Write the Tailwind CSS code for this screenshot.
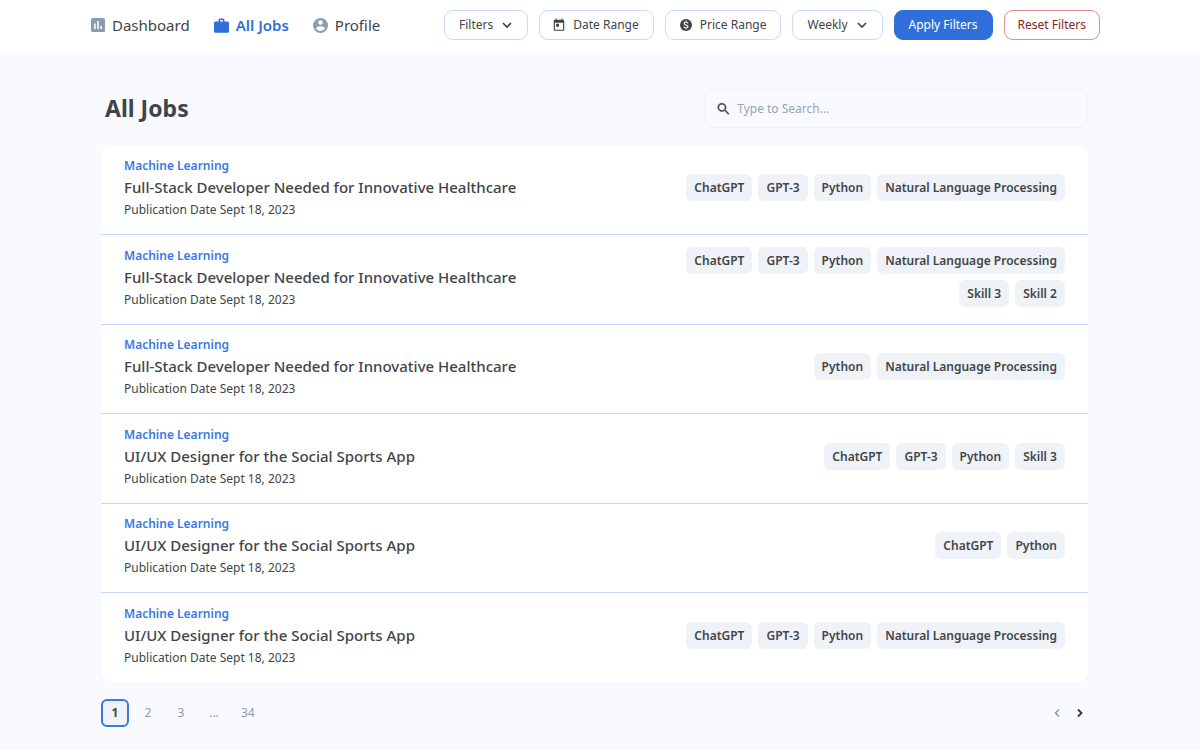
<!DOCTYPE html>
<html lang="en">
<head>
<meta charset="utf-8">
<meta name="viewport" content="width=device-width, initial-scale=1">
<title>All Jobs</title>
<script src="https://cdn.jsdelivr.net/npm/@tailwindcss/browser@4"></script>
</head>
<body class="min-h-screen bg-[#f8faff] font-['Noto_Sans',sans-serif] text-xs text-[#414548]">
<header class="flex items-center justify-between bg-white pt-[10px] pb-[13px] pr-[100px] pl-[91px]">
  <nav class="flex items-center gap-6 text-[15px] leading-5">
    <a href="#" class="flex items-center gap-[7px]">
      <svg class="size-3.5" viewBox="3 3 18 18" fill="#8c9bb3"><path d="M19 3H5a2 2 0 0 0-2 2v14a2 2 0 0 0 2 2h14a2 2 0 0 0 2-2V5a2 2 0 0 0-2-2Z"/><path d="M7 10h2v7H7zM11 7h2v10h-2zM15 13h2v4h-2z" fill="#fff"/></svg>
      Dashboard
    </a>
    <a href="#" class="flex items-center gap-[7px] font-semibold text-[#306fdb]">
      <svg class="size-[15px]" viewBox="2 2 20 19" fill="currentColor"><path d="M20 6h-4V4a2 2 0 0 0-2-2h-4a2 2 0 0 0-2 2v2H4a2 2 0 0 0-2 2v11a2 2 0 0 0 2 2h16a2 2 0 0 0 2-2V8a2 2 0 0 0-2-2Zm-6 0h-4V4h4v2Z"/></svg>
      All Jobs
    </a>
    <a href="#" class="flex items-center gap-[7px]">
      <svg class="size-[15px]" viewBox="2 2 20 20" fill="#8c9bb3"><path d="M12 2a10 10 0 1 0 0 20 10 10 0 0 0 0-20Zm0 3a3 3 0 1 1 0 6 3 3 0 0 1 0-6Zm0 14.200a7.200 7.200 0 0 1-6-3.220c.03-1.990 4-3.080 6-3.080s5.970 1.090 6 3.080a7.200 7.200 0 0 1-6 3.220Z"/></svg>
      Profile
    </a>
  </nav>
  <div class="flex items-center gap-[11px] leading-4">
    <button type="button" class="flex h-[30px] items-center gap-2 rounded-[9px] border border-[#cadbfa] px-3.5">Filters
      <svg class="size-3" viewBox="0 0 12 12" fill="none" stroke="currentColor" stroke-width="1.600"><path d="m2 4 4 4 4-4"/></svg>
    </button>
    <button type="button" class="flex h-[30px] items-center gap-[7px] rounded-[9px] border border-[#cadbfa] pr-3.5 pl-3">
      <svg class="size-3.5" viewBox="1 0 22 24" fill="currentColor"><path d="M19 3h-1V1h-2v2H8V1H6v2H5a2 2 0 0 0-2 2v15a2 2 0 0 0 2 2h14a2 2 0 0 0 2-2V5a2 2 0 0 0-2-2Zm0 17H5V8h14v12ZM7 10h5v5H7v-5Z"/></svg>
      Date Range
    </button>
    <button type="button" class="flex h-[30px] items-center gap-2 rounded-[9px] border border-[#cadbfa] px-3.5">
      <svg class="size-3" viewBox="2 2 20 20" fill="currentColor"><path d="M12 2a10 10 0 1 0 0 20 10 10 0 0 0 0-20Z"/><path d="M15.200 9.200c-.3-1.500-1.500-2.200-3.200-2.200s-3.100.9-3.100 2.400c0 3.400 6.400 1.700 6.400 5.100 0 1.600-1.400 2.500-3.300 2.500s-3.200-.8-3.400-2.500M12 4.800V7m0 10v2.200" fill="none" stroke="#fff" stroke-width="1.900"/></svg>
      Price Range
    </button>
    <button type="button" class="flex h-[30px] items-center gap-2 rounded-[9px] border border-[#cadbfa] px-3.5">Weekly
      <svg class="size-3" viewBox="0 0 12 12" fill="none" stroke="currentColor" stroke-width="1.600"><path d="m2 4 4 4 4-4"/></svg>
    </button>
    <button type="button" class="h-[30px] rounded-[9px] border border-[#306fdb] bg-[#306fdb] px-3.5 text-white">Apply Filters</button>
    <button type="button" class="h-[30px] rounded-[9px] border border-[#e28d8d] px-[13px] text-[#842525]">Reset Filters</button>
  </div>
</header>
<main class="pt-9 pr-[112px] pb-5 pl-[101px]">
  <div class="flex items-center justify-between pl-1">
    <h1 class="pb-0.5 text-[23px] leading-8 font-bold">All Jobs</h1>
    <label class="flex h-[39px] w-96 items-center gap-[7px] rounded-[9px] border border-[#f1f3f8] px-3">
      <svg class="size-3.5" viewBox="2 2 20 20" fill="currentColor" stroke="currentColor" stroke-width=".4" aria-label="Search"><path d="M15.500 14h-.79l-.28-.27a6.500 6.500 0 1 0-.7.700l.27.280v.790l5 4.990L20.490 19l-4.990-5Zm-6 0a4.500 4.500 0 1 1 0-9 4.500 4.500 0 0 1 0 9Z"/></svg>
      <input type="text" placeholder="Type to Search..." class="w-full bg-transparent outline-none placeholder:text-[#95a3ba]">
    </label>
  </div>
  <ul class="mt-[18px] divide-y divide-[#c5d7f9] rounded-[9px] bg-white leading-[22px] shadow-[0_0_2px_#edf1fa]">
    <li class="flex items-center justify-between px-[23px] pb-[13px] odd:pt-[9px] even:pt-2.5">
      <div><p class="font-semibold text-[#3b78e3]">Machine Learning</p><h2 class="text-[15px] leading-5 font-medium"><a href="#">Full-Stack Developer Needed for Innovative Healthcare</a></h2><p class="mt-0.5">Publication Date Sept 18, 2023</p></div>
      <div class="flex w-96 flex-wrap justify-end gap-1.5 pb-0.5 font-semibold">
        <span class="rounded-md bg-[#eff2f7] px-2 py-[3px] leading-[21px]">ChatGPT</span><span class="rounded-md bg-[#eff2f7] px-2 py-[3px] leading-[21px]">GPT-3</span><span class="rounded-md bg-[#eff2f7] px-2 py-[3px] leading-[21px]">Python</span><span class="rounded-md bg-[#eff2f7] px-2 py-[3px] leading-[21px]">Natural Language Processing</span>
      </div>
    </li>
    <li class="flex items-center justify-between px-[23px] pb-[13px] odd:pt-[9px] even:pt-2.5">
      <div><p class="font-semibold text-[#3b78e3]">Machine Learning</p><h2 class="text-[15px] leading-5 font-medium"><a href="#">Full-Stack Developer Needed for Innovative Healthcare</a></h2><p class="mt-0.5">Publication Date Sept 18, 2023</p></div>
      <div class="flex w-96 flex-wrap justify-end gap-1.5 pb-0.5 font-semibold">
        <span class="rounded-md bg-[#eff2f7] px-2 py-[3px] leading-[21px]">ChatGPT</span><span class="rounded-md bg-[#eff2f7] px-2 py-[3px] leading-[21px]">GPT-3</span><span class="rounded-md bg-[#eff2f7] px-2 py-[3px] leading-[21px]">Python</span><span class="rounded-md bg-[#eff2f7] px-2 py-[3px] leading-[21px]">Natural Language Processing</span><span class="rounded-md bg-[#eff2f7] px-2 py-[3px] leading-[21px]">Skill 3</span><span class="rounded-md bg-[#eff2f7] px-2 py-[3px] leading-[21px]">Skill 2</span>
      </div>
    </li>
    <li class="flex items-center justify-between px-[23px] pb-[13px] odd:pt-[9px] even:pt-2.5">
      <div><p class="font-semibold text-[#3b78e3]">Machine Learning</p><h2 class="text-[15px] leading-5 font-medium"><a href="#">Full-Stack Developer Needed for Innovative Healthcare</a></h2><p class="mt-0.5">Publication Date Sept 18, 2023</p></div>
      <div class="flex w-96 flex-wrap justify-end gap-1.5 pb-0.5 font-semibold">
        <span class="rounded-md bg-[#eff2f7] px-2 py-[3px] leading-[21px]">Python</span><span class="rounded-md bg-[#eff2f7] px-2 py-[3px] leading-[21px]">Natural Language Processing</span>
      </div>
    </li>
    <li class="flex items-center justify-between px-[23px] pb-[13px] odd:pt-[9px] even:pt-2.5">
      <div><p class="font-semibold text-[#3b78e3]">Machine Learning</p><h2 class="text-[15px] leading-5 font-medium"><a href="#">UI/UX Designer for the Social Sports App</a></h2><p class="mt-0.5">Publication Date Sept 18, 2023</p></div>
      <div class="flex w-96 flex-wrap justify-end gap-1.5 pb-0.5 font-semibold">
        <span class="rounded-md bg-[#eff2f7] px-2 py-[3px] leading-[21px]">ChatGPT</span><span class="rounded-md bg-[#eff2f7] px-2 py-[3px] leading-[21px]">GPT-3</span><span class="rounded-md bg-[#eff2f7] px-2 py-[3px] leading-[21px]">Python</span><span class="rounded-md bg-[#eff2f7] px-2 py-[3px] leading-[21px]">Skill 3</span>
      </div>
    </li>
    <li class="flex items-center justify-between px-[23px] pb-[13px] odd:pt-[9px] even:pt-2.5">
      <div><p class="font-semibold text-[#3b78e3]">Machine Learning</p><h2 class="text-[15px] leading-5 font-medium"><a href="#">UI/UX Designer for the Social Sports App</a></h2><p class="mt-0.5">Publication Date Sept 18, 2023</p></div>
      <div class="flex w-96 flex-wrap justify-end gap-1.5 pb-0.5 font-semibold">
        <span class="rounded-md bg-[#eff2f7] px-2 py-[3px] leading-[21px]">ChatGPT</span><span class="rounded-md bg-[#eff2f7] px-2 py-[3px] leading-[21px]">Python</span>
      </div>
    </li>
    <li class="flex items-center justify-between px-[23px] pb-[13px] odd:pt-[9px] even:pt-2.5">
      <div><p class="font-semibold text-[#3b78e3]">Machine Learning</p><h2 class="text-[15px] leading-5 font-medium"><a href="#">UI/UX Designer for the Social Sports App</a></h2><p class="mt-0.5">Publication Date Sept 18, 2023</p></div>
      <div class="flex w-96 flex-wrap justify-end gap-1.5 pb-0.5 font-semibold">
        <span class="rounded-md bg-[#eff2f7] px-2 py-[3px] leading-[21px]">ChatGPT</span><span class="rounded-md bg-[#eff2f7] px-2 py-[3px] leading-[21px]">GPT-3</span><span class="rounded-md bg-[#eff2f7] px-2 py-[3px] leading-[21px]">Python</span><span class="rounded-md bg-[#eff2f7] px-2 py-[3px] leading-[21px]">Natural Language Processing</span>
      </div>
    </li>
  </ul>
  <nav aria-label="Pagination" class="mt-[17px] flex items-center justify-between">
    <div class="flex items-center gap-[5px] text-[#8c9bb3]">
      <button type="button" aria-current="page" class="size-7 rounded-md border-2 border-[#3b78e3] bg-[#eff2f7] font-bold text-[#414548]">1</button>
      <button type="button" class="size-7">2</button>
      <button type="button" class="size-7">3</button>
      <span class="w-7 text-center">...</span>
      <button type="button" class="h-7 px-2">34</button>
    </div>
    <div class="flex items-center gap-[11px] pr-0.5">
      <button type="button" aria-label="Previous page"><svg class="size-3" viewBox="0 0 12 12" fill="none" stroke="#8c9bb3" stroke-width="1.600"><path d="m8 2.500-3.500 3.500 3.500 3.500"/></svg></button>
      <button type="button" aria-label="Next page"><svg class="size-3" viewBox="0 0 12 12" fill="none" stroke="#34383b" stroke-width="1.800"><path d="m4 2.500 3.500 3.500-3.500 3.500"/></svg></button>
    </div>
  </nav>
</main>
</body>
</html>
